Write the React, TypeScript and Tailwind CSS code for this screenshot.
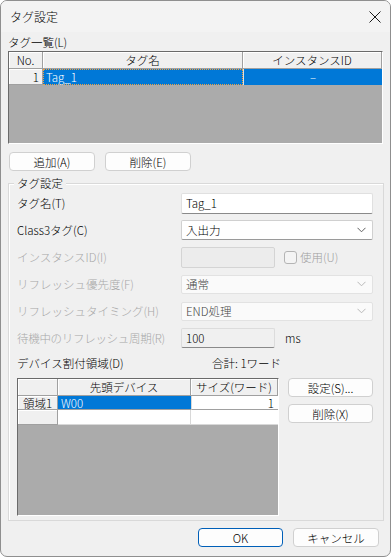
import React from "react";

function Chevron({ light }: { light?: boolean }) {
  return (
    <svg width="9" height="6" viewBox="0 0 9 6" className="mr-[6px]">
      <polyline points="0.5,0.8 4.5,4.8 8.5,0.8" fill="none" stroke={light ? "#b8b8b8" : "#606060"} strokeWidth="1" />
    </svg>
  );
}

function Btn({ children, w, primary }: { children: React.ReactNode; w: string; primary?: boolean }) {
  return (
    <div
      className={
        "h-[19px] flex items-center justify-center rounded-[4px] bg-[#fdfdfd] " +
        w +
        (primary ? " border-[1.5px] border-[#005fb8]" : " border border-[#d0d0d0]")
      }
    >
      {children}
    </div>
  );
}

const hdr = "bg-[#f0f0f0] border-r border-b border-[#a0a0a0] shadow-[inset_1px_1px_0_#ffffff] flex items-center";

export default function App() {
  return (
    <div className="w-[391px] h-[557px] bg-[#f0f0f0] border border-[#8f8f8f] rounded-[7px] overflow-hidden flex flex-col text-[11.5px] leading-[14px] font-light text-black font-['Noto_Sans_CJK_JP','Noto_Sans',sans-serif]">
      {/* title bar */}
      <div className="h-[31px] shrink-0 flex items-center pl-[9px] pr-[9px] bg-[#f3f3f3]">
        <span className="text-[12px]">タグ設定</span>
        <svg width="12" height="12" viewBox="0 0 12 12" className="ml-auto">
          <path d="M0.5 0.5 L11.5 11.5 M11.5 0.5 L0.5 11.5" stroke="#1a1a1a" strokeWidth="1" />
        </svg>
      </div>
      <div className="px-[7px] flex flex-col">
        <div className="mt-[3px] h-[14px]">タグ一覧(L)</div>
        {/* tag table */}
        <div className="mt-[2px] w-[375px] h-[93px] bg-[#ababab] border-t border-l border-[#6a6a6a] border-r border-b border-r-white border-b-white flex flex-col">
          <div className="flex h-[17px]">
            <div className={hdr + " w-[34px] justify-center"}>No.</div>
            <div className={hdr + " w-[200px] justify-center"}>タグ名</div>
            <div className={hdr + " w-[139px] justify-center"}>インスタンスID</div>
          </div>
          <div className="flex h-[16px]">
            <div className={hdr + " w-[34px] justify-end pr-[3px]"}>1</div>
            <div className="w-[200px] bg-[#0078d7] text-white border border-dotted border-[#f0a040] flex items-center pl-[2px]">Tag_1</div>
            <div className="w-[139px] bg-[#0078d7] text-white border-l border-[#e0e0e0] flex items-center justify-center">–</div>
          </div>
        </div>
        {/* buttons */}
        <div className="mt-[8px] ml-[1px] flex gap-[10px]">
          <Btn w="w-[86px]">追加(A)</Btn>
          <Btn w="w-[86px]">削除(E)</Btn>
        </div>
        {/* group */}
        <div className="relative mt-[12px] w-[376px] h-[338px] border border-[#d9d9d9] shadow-[inset_1px_1px_0_#ffffff]">
          <div className="absolute -top-[8px] left-[5px] px-[3px] bg-[#f0f0f0] h-[14px]">タグ設定</div>
          <div className="pt-[9px] pl-[8px] flex flex-col gap-[7px]">
            <div className="flex items-center h-[20px]">
              <div className="w-[164px]">タグ名(T)</div>
              <div className="w-[192px] h-[21px] bg-white border border-[#e0e0e0] border-b-[#8a8a8a] flex items-center pl-[4px] rounded-[2px]">Tag_1</div>
            </div>
            <div className="flex items-center h-[20px]">
              <div className="w-[164px]">Class3タグ(C)</div>
              <div className="w-[192px] h-[20px] bg-white border border-[#d0d0d0] border-b-[#9a9a9a] flex items-center pl-[4px] rounded-[2px]">
                <span>入出力</span>
                <span className="ml-auto">
                  <Chevron />
                </span>
              </div>
            </div>
            <div className="flex items-center h-[20px]">
              <div className="w-[164px] text-[#a8a8a8]">インスタンスID(I)</div>
              <div className="w-[94px] h-[21px] bg-[#ececec] border border-[#d4d4d4] rounded-[2px]"></div>
              <div className="ml-[9px] w-[13px] h-[13px] border border-[#b4b4b4] rounded-[3px] bg-[#f4f4f4]"></div>
              <div className="ml-[3px] text-[#a0a0a0]">使用(U)</div>
            </div>
            <div className="flex items-center h-[20px]">
              <div className="w-[164px] text-[#a8a8a8]">リフレッシュ優先度(F)</div>
              <div className="w-[192px] h-[19px] bg-[#fafafa] border border-[#e2e2e2] flex items-center pl-[4px] rounded-[2px] text-[#444]">
                <span>通常</span>
                <span className="ml-auto">
                  <Chevron light />
                </span>
              </div>
            </div>
            <div className="flex items-center h-[20px]">
              <div className="w-[164px] text-[#a8a8a8]">リフレッシュタイミング(H)</div>
              <div className="w-[192px] h-[19px] bg-[#fafafa] border border-[#e2e2e2] flex items-center pl-[4px] rounded-[2px] text-[#444]">
                <span>END処理</span>
                <span className="ml-auto">
                  <Chevron light />
                </span>
              </div>
            </div>
            <div className="flex items-center h-[20px]">
              <div className="w-[164px] text-[#a8a8a8] tracking-[-0.3px]">待機中のリフレッシュ周期(R)</div>
              <div className="w-[94px] h-[20px] bg-[#f0f0f0] border border-[#dcdcdc] border-b-[#8a8a8a] flex items-center pl-[4px] rounded-[2px]">100</div>
              <div className="ml-[10px]">ms</div>
            </div>
          </div>
          <div className="mt-[8px] pl-[8px] h-[14px] flex">
            <div className="w-[195px]">デバイス割付領域(D)</div>
            <div>合計: 1ワード</div>
          </div>
          <div className="mt-[8px] pl-[8px] flex">
            <div className="w-[262px] h-[138px] bg-[#ababab] border-t border-l border-[#6a6a6a] border-r border-b border-r-white border-b-white flex flex-col">
              <div className="flex h-[17px]">
                <div className={hdr + " w-[40px]"}></div>
                <div className={hdr + " w-[133px] justify-center"}>先頭デバイス</div>
                <div className={hdr + " w-[87px] justify-center"}>サイズ(ワード)</div>
              </div>
              <div className="flex h-[14px]">
                <div className={hdr + " w-[40px] justify-center"}>領域1</div>
                <div className="w-[133px] bg-[#0078d7] text-white flex items-center pl-[3px] border-b border-[#a0a0a0]">W00</div>
                <div className="w-[87px] bg-white flex items-center justify-end pr-[4px] border-b border-l border-[#d8d8d8] border-b-[#a0a0a0]">1</div>
              </div>
              <div className="flex h-[15px]">
                <div className={hdr + " w-[40px]"}></div>
                <div className="w-[133px] bg-white border-b border-r border-[#d8d8d8]"></div>
                <div className="w-[87px] bg-white border-b border-[#d8d8d8]"></div>
              </div>
            </div>
            <div className="ml-[9px] flex flex-col gap-[7px]">
              <Btn w="w-[85px]">設定(S)...</Btn>
              <Btn w="w-[85px]">削除(X)</Btn>
            </div>
          </div>
        </div>
        <div className="mt-[7px] pr-[4px] flex justify-end gap-[10px]">
          <Btn w="w-[85px]" primary>
            OK
          </Btn>
          <Btn w="w-[86px]">キャンセル</Btn>
        </div>
      </div>
    </div>
  );
}
